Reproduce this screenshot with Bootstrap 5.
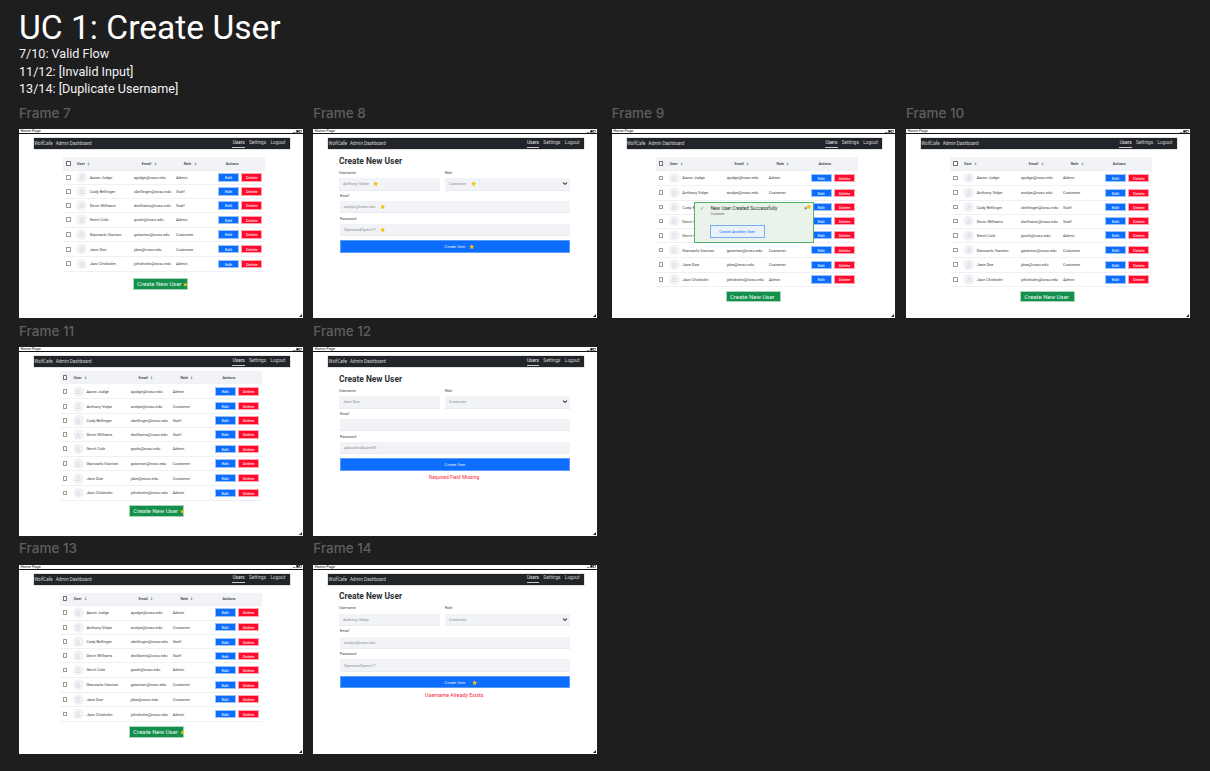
<!doctype html>
<html lang="en">
<head>
<meta charset="utf-8">
<title>UC 1: Create User</title>
<link href="https://cdn.jsdelivr.net/npm/bootstrap@5.3.0/dist/css/bootstrap.min.css" rel="stylesheet">
<style>
html,body{height:100%}
body{background:#1e1e1e;color:#fff;font-family:Roboto,"Liberation Sans",sans-serif;overflow:hidden;position:relative}
.deck-head{padding:9px 0 0 19px}
.deck-title{font-size:33.6px;line-height:38px;font-weight:400;margin:0 0 -2px}
.deck-line{font-size:12.6px;line-height:17.5px;margin:0;color:#f2f2f2}
.frm{position:absolute;width:283.5px}
.frm-label{font-family:Inter,"Liberation Sans",sans-serif;font-weight:500;font-size:13.5px;line-height:17px;color:#5e5e5e;margin-bottom:7.7px}
.win{position:relative;background:#fff;height:188.7px;color:#212529;overflow:hidden}
.f7{left:19px;top:104.6px}.f8{left:313.3px;top:104.6px}.f9{left:611.7px;top:104.6px}.f10{left:906px;top:104.6px}
.f11{left:19px;top:322.6px}.f12{left:313.3px;top:322.6px}
.f13{left:19px;top:540.3px}.f14{left:313.3px;top:540.3px}
.win-bar{height:4.7px;background:#fff;border-bottom:1px solid #111;font-size:3.9px;line-height:3.7px;padding-left:1.5px;color:#222;display:flex;justify-content:space-between;white-space:nowrap}
.win-ctl{width:9px;height:3px;margin:.4px 1px 0 0;display:block}
.win-grip{position:absolute;right:1px;bottom:1px;width:3px;height:3px;display:block}
.wnav.navbar{margin:4px 0 0 15.2px;width:255.5px;height:11.2px;padding:0 4px 0 0;background:#212529;box-shadow:0 0 0 .4px #bbb}
.wnav .navbar-brand{color:#d6d6d6;font-size:4.5px;line-height:7px;padding:0;margin:0}
.wnav .navbar-brand+.navbar-brand{margin-left:3px}
.wnav .nav-link{color:#d0d0d0;font-size:4.7px;line-height:6px;padding:0 .5px 1px;margin-left:3.4px;border-bottom:1px solid transparent}
.wnav .nav-link.active{color:#e8e8e8;border-bottom-color:#c8c8c8}
.utbl.table{table-layout:fixed;width:201.7px;margin:7.7px 0 0 44.3px;font-size:4px;line-height:5px;--bs-table-border-color:#eef0f3}
.f11 .utbl.table,.f13 .utbl.table{margin-left:41px}
.f11 .utbl.table{margin-top:4.3px}
.utbl th,.utbl td{padding:0 0 0 3.2px;vertical-align:middle;white-space:nowrap;overflow:hidden;color:#3a3d42;font-weight:400}
.utbl thead th{background:#f1f3f7;height:13.6px;font-size:3.8px;font-weight:500;padding-left:10.9px;color:#33363b}
.f11 .utbl thead th,.f13 .utbl thead th{height:12.5px}
.utbl thead th.c-usr{padding-left:3.7px}
.utbl th.c-chk,.utbl td.c-chk{padding-left:2.7px}
.c-chk{width:10px}.c-usr{width:57.5px}.c-mail{width:42px}.c-role{width:42px}
.tick{display:block;width:4.8px;height:4.8px;border:1px solid #9a9a9a;border-radius:.6px;background:#fff}
thead .tick{border-color:#707070}
.arr{width:3.2px;height:3.4px;margin-left:2.4px;vertical-align:-.3px;display:inline-block}
.ava{width:10.6px;height:10.6px;border-radius:50%;background:#f1f3f7;margin-right:2.6px;flex:none}
.ava svg{width:6px;height:6px}
.act{width:21px;height:8.2px;padding:0;font-size:4.2px;line-height:7px;border-radius:0;color:#fff;border:1px solid #9dc3fb}
.act-e{background:#0d6efd}
.act-d{background:#ff0a2c;border-color:#ffa5b0;margin-left:2.4px}
.newu{display:block;width:55.2px;height:11.4px;padding:0 0 0 3px;text-align:left;font-size:6px;line-height:10px;border-radius:0;background:#13904b;color:#e8f5ec;border:1px solid #a9d6bb;margin:6.6px 0 0 114px;white-space:nowrap;position:relative}
.f9 .newu,.f10 .newu{margin-top:3.7px;padding:0 2px 0 0;text-align:center}
.f11 .newu,.f13 .newu{margin:4.4px 0 0 110.3px}
.newu .st{position:absolute;right:-.6px;top:2.6px;width:4.8px;height:4.8px}
.f11 .newu .st,.f13 .newu .st{right:-1.4px}
.st{width:5.4px;height:5.4px;fill:#f5c211;flex:none;display:inline-block}
.uform{margin:0 0 0 26.7px;width:230px}
.utitle{font-size:8.4px;line-height:12px;font-weight:700;margin:5.4px 0 4.2px -1px;color:#2b2e33}
.ugrp{margin-top:3.2px}
.urow{display:flex;gap:4.8px;margin-left:-1px}
.urow .ugrp{margin-top:0}
.u-a{width:101.2px;flex:none}.u-b{flex:1 1 auto}
.ulbl.form-label{display:block;font-size:3.7px;line-height:4.6px;margin:0 0 2.5px;color:#40444a}
.uinp{display:flex;align-items:center;gap:4.2px;height:12.7px;padding:0 4px;font-size:4px;line-height:5px;color:#8b8f96;background-color:#f1f3f7;border:0;border-bottom:1px solid #e9ebef;border-radius:0;min-height:0}
.uinp.form-select{background-image:url("data:image/svg+xml,%3csvg xmlns='http://www.w3.org/2000/svg' viewBox='0 0 16 16'%3e%3cpath fill='none' stroke='%23343a40' stroke-width='3' d='M2 5l6 6 6-6'/%3e%3c/svg%3e");background-size:5.5px 5px;background-position:right 2.5px center;padding-right:10px}
.ubtn.btn{display:block;position:relative;width:100%;height:12.6px;margin-top:3.7px;padding:0;font-size:4px;line-height:5px;border-radius:0;background:#0d6efd;border:1px solid #5c9dfc;color:#e9f0ff}
.ubtn .st{position:absolute;left:128px;top:3px}
.f14 .ubtn .st{left:131.4px}
.uerr{font-size:5px;line-height:6px;color:#ff2340;text-align:center;margin:3.6px 0 0 -1.5px}
.f14 .uerr{font-size:5.3px}
.okbox{position:absolute;left:82.6px;top:72.4px;width:119.7px;height:41.4px;background:#e9f3ea;border:1px solid #4fb26c;padding:3px 0 0 6.2px;color:#222}
.okbox .chk{position:absolute;left:5px;top:3px;font-size:4.6px;line-height:6px;color:#36a857}
.okhead{font-size:4.8px;line-height:6px;margin:0 0 0 9.2px;color:#2a2a2a}
.oksub{font-size:3.2px;line-height:4.4px;margin:.4px 0 0 9.2px;color:#5d625f}
.okx{position:absolute;right:6px;top:3.6px;font-size:5px;line-height:5px;color:#333}
.okbox .st{position:absolute;right:1.6px;top:1.6px}
.okgo{position:absolute;left:14.4px;top:22.4px;width:55px;height:13px;padding:0;font-size:4px;line-height:5px;border-radius:0;background:#e9f1fb;border:1px solid #79acf5;color:#0d6efd}
</style>
</head>
<body>
<header class="deck-head">
  <h1 class="deck-title">UC 1: Create User</h1>
  <p class="deck-line">7/10: Valid Flow</p>
  <p class="deck-line">11/12: [Invalid Input]</p>
  <p class="deck-line">13/14: [Duplicate Username]</p>
</header>
<main id="deck"></main>
<script src="https://cdn.jsdelivr.net/npm/bootstrap@5.3.0/dist/js/bootstrap.bundle.min.js"></script>
<script>
const STAR='<svg class="st" viewBox="0 0 24 24"><path d="M12 1l3.4 7.2 7.6 1-5.6 5.4 1.4 7.9L12 18.8 5.2 22.5l1.4-7.9L1 9.2l7.6-1z"/></svg>';
const PERSON='<svg viewBox="0 0 24 24" fill="none" stroke="#c6cad3" stroke-width="1.6"><circle cx="12" cy="7.5" r="4.5"/><path d="M4 22c0-6 3-9 8-9s8 3 8 9z"/></svg>';
const ARR='<svg class="arr" viewBox="0 0 8 8" fill="none" stroke="#555" stroke-width="1"><path d="M4 0v7M1.5 4.5L4 7l2.5-2.5"/></svg>';
const U={a:['Aaron Judge','ajudge@ncsu.edu','Admin'],v:['Anthony Volpe','avolpe@ncsu.edu','Customer'],b:['Cody Bellinger','cbellinger@ncsu.edu','Staff'],w:['Devin Williams','dwilliams@ncsu.edu','Staff'],c:['Gerrit Cole','gcole@ncsu.edu','Admin'],s:['Giancarlo Stanton','gstanton@ncsu.edu','Customer'],d:['Jane Doe','jdoe@ncsu.edu','Customer'],h:['Jazz Chisholm','jchisholm@ncsu.edu','Admin']};
const H7=[14,14,14,14.7,14.7,14.7,14.7], H8=[15,14.7,13.9,14,14.7,14.7,14.7,14.7];
function nav(){return `<nav class="navbar wnav"><div class="d-flex"><a class="navbar-brand" href="#">WolfCafe</a><a class="navbar-brand" href="#">Admin Dashboard</a></div><ul class="nav"><li class="nav-item"><a class="nav-link active" href="#">Users</a></li><li class="nav-item"><a class="nav-link" href="#">Settings</a></li><li class="nav-item"><a class="nav-link" href="#">Logout</a></li></ul></nav>`}
function table(keys,star){const hs=keys.length==7?H7:H8;
 const rows=[...keys].map((k,i)=>`<tr style="height:${hs[i]}px"><td class="c-chk"><span class="tick"></span></td><td><div class="d-flex align-items-center"><span class="ava d-flex align-items-center justify-content-center">${PERSON}</span>${U[k][0]}</div></td><td>${U[k][1]}</td><td>${U[k][2]}</td><td><button class="btn act act-e">Edit</button><button class="btn act act-d">Delete</button></td></tr>`).join('');
 return `<table class="table utbl"><thead><tr><th class="c-chk"><span class="tick"></span></th><th class="c-usr">User${ARR}</th><th class="c-mail">Email${ARR}</th><th class="c-role">Role${ARR}</th><th>Actions</th></tr></thead><tbody>${rows}</tbody></table><button class="btn newu">Create New User${star?STAR:''}</button>`}
function form(v,star,err,btnStar){const s=star?STAR:'';return `<div class="uform"><h2 class="utitle">Create New User</h2><div class="urow"><div class="ugrp u-a"><label class="form-label ulbl">Username</label><div class="form-control uinp">${v[0]}${s}</div></div><div class="ugrp u-b"><label class="form-label ulbl">Role</label><div class="form-select uinp">Customer${s}</div></div></div><div class="ugrp"><label class="form-label ulbl">Email</label><div class="form-control uinp">${v[1]}${s}</div></div><div class="ugrp"><label class="form-label ulbl">Password</label><div class="form-control uinp">${v[2]}${s}</div></div><button class="btn ubtn">Create User${btnStar?STAR:''}</button>${err?`<p class="uerr">${err}</p>`:''}</div>`}
const OK=`<div class="okbox"><span class="chk">✓</span><p class="okhead">New User Created Successfully</p><p class="oksub">Customer</p><span class="okx">×</span>${STAR}<button class="btn okgo">Create Another User</button></div>`;
const F=[[7,table('abwcsdh',1)],[8,form(['Anthony Volpe','avolpe@ncsu.edu','OpensardOpens!7'],1,'',1)],[9,table('avbwcsdh',0)+OK],[10,table('avbwcsdh',0)],[11,table('avbwcsdh',1)],[12,form(['Jane Doe','','pAssw0rd4user55'],0,'Required Field Missing',0)],[13,table('avbwcsdh',1)],[14,form(['Anthony Volpe','avolpe@ncsu.edu','Opensard!pens17'],0,'Username Already Exists',1)]];
const CTL='<svg class="win-ctl" viewBox="0 0 9 3"><path d="M0 2.6h2.4" stroke="#111" stroke-width=".6"/><rect x="3.3" y=".2" width="2.4" height="2.4" fill="#111"/><rect x="6.5" y=".3" width="2.2" height="2.3" fill="none" stroke="#111" stroke-width=".5"/></svg>';
const GRIP='<svg class="win-grip" viewBox="0 0 3 3"><path d="M3 0v3H0z" fill="#222"/></svg>';
document.getElementById('deck').innerHTML=F.map(([n,c])=>`<section class="frm f${n}"><div class="frm-label">Frame ${n}</div><div class="win"><div class="win-bar"><span>Home Page</span>${CTL}</div>${nav()}${c}${GRIP}</div></section>`).join('');
</script>
</body>
</html>
